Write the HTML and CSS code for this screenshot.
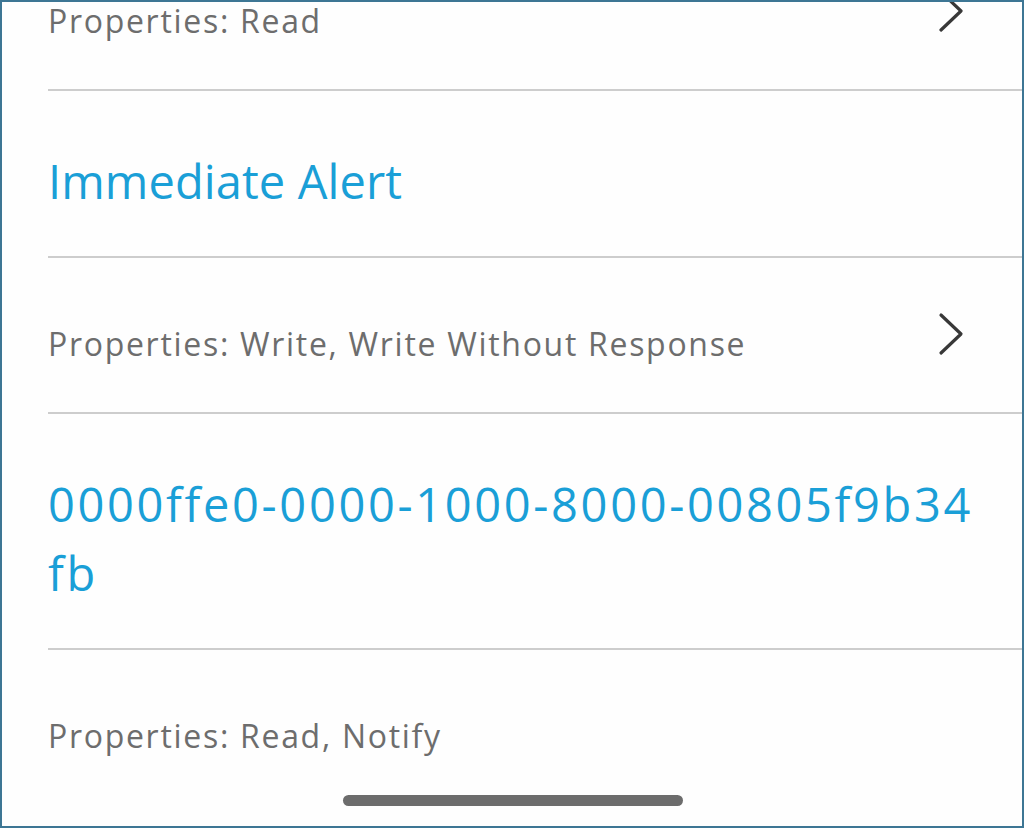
FILE: index.html
```html
<!DOCTYPE html>
<html lang="en">
<head>
<meta charset="utf-8">
<title>Characteristics</title>
<link rel="stylesheet" href="styles.css">
</head>
<body>
<div class="frame">
  <div class="list">
    <div class="row prop-row">
      <div class="prop">Properties: Read</div>
      <svg class="chev" width="26" height="44" viewBox="0 0 26 44"><path d="M3 3 L23 22 L3 41" fill="none" stroke="#383838" stroke-width="3.2" stroke-linecap="round" stroke-linejoin="round"/></svg>
    </div>
    <div class="row title-row">
      <div class="title">Immediate Alert</div>
    </div>
    <div class="row prop-row">
      <div class="prop">Properties: Write, Write Without Response</div>
      <svg class="chev" width="26" height="44" viewBox="0 0 26 44"><path d="M3 3 L23 22 L3 41" fill="none" stroke="#383838" stroke-width="3.2" stroke-linecap="round" stroke-linejoin="round"/></svg>
    </div>
    <div class="row title-row">
      <div class="title uuid">0000ffe0-0000-1000-8000-00805f9b34fb</div>
    </div>
    <div class="row prop-row last">
      <div class="prop">Properties: Read, Notify</div>
    </div>
  </div>
  <div class="home-indicator"></div>
</div>
</body>
</html>
```

FILE: styles.css
```css
html, body {
  margin: 0;
  padding: 0;
  background: #ffffff;
}

.frame {
  position: relative;
  box-sizing: border-box;
  width: 1024px;
  height: 828px;
  border: 2px solid #3d7694;
  overflow: hidden;
  background: #fefefe;
  font-family: "Open Sans", "Noto Sans", sans-serif;
}

.list {
  margin-top: -67px;
  margin-left: 46px;
}

.row {
  display: flex;
  align-items: center;
  border-bottom: 2px solid #cdcdcd;
}

.row.last {
  border-bottom: none;
}

.prop-row {
  height: 154px;
}

.prop {
  flex: 1;
  box-sizing: border-box;
  padding-top: 18px;
  font-size: 32px;
  line-height: 44px;
  color: #6d6d6d;
  letter-spacing: 1.7px;
}

.chev {
  flex: none;
  margin-right: 58px;
  margin-top: -2px;
}

.title-row {
  padding: 56px 40px 40px 0;
}

.title {
  font-size: 47px;
  line-height: 69px;
  color: #1a9fd7;
  letter-spacing: 0.1px;
}

.uuid {
  word-break: break-all;
  letter-spacing: 2.65px;
}

.home-indicator {
  position: absolute;
  left: 341px;
  bottom: 20px;
  width: 340px;
  height: 11px;
  border-radius: 6px;
  background: #6c6c6c;
}
```
